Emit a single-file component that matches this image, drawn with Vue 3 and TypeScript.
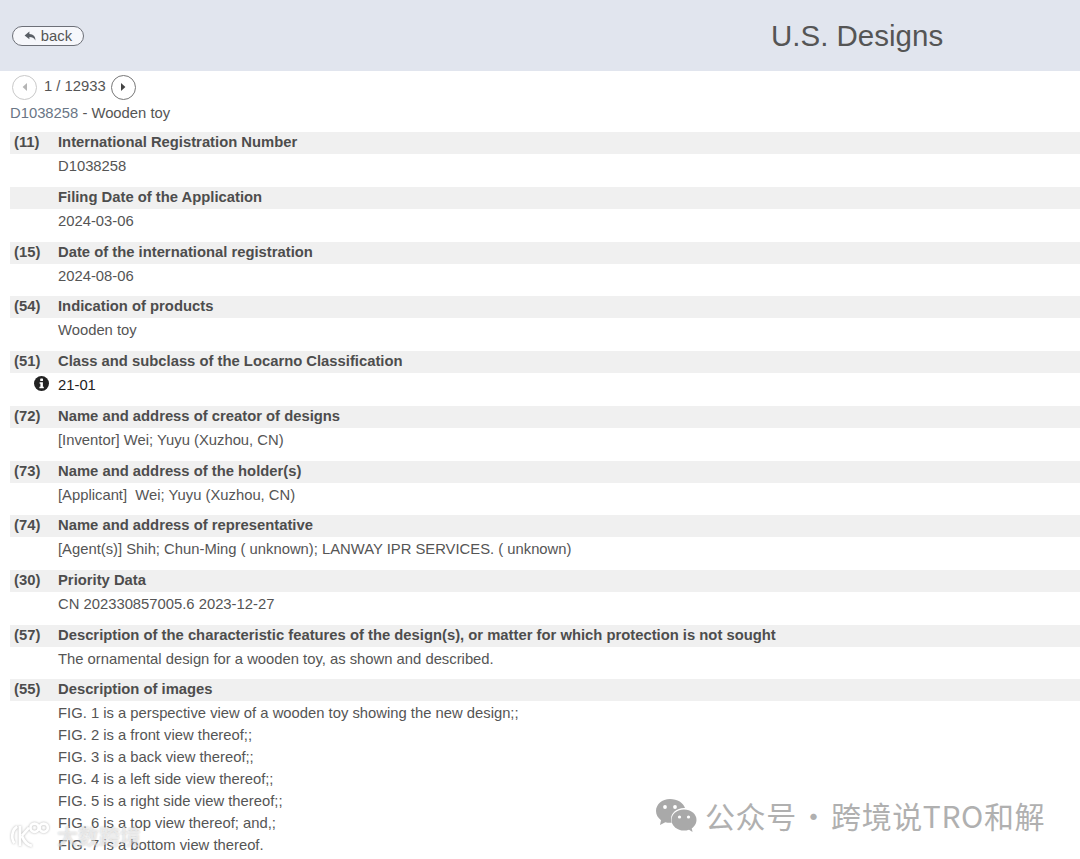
<script setup lang="ts">
interface Row { code: string; title: string; lines: string[]; dark?: boolean; info?: boolean }
const rows: Row[] = [
  { code: '(11)', title: 'International Registration Number', lines: ['D1038258'] },
  { code: '', title: 'Filing Date of the Application', lines: ['2024-03-06'] },
  { code: '(15)', title: 'Date of the international registration', lines: ['2024-08-06'] },
  { code: '(54)', title: 'Indication of products', lines: ['Wooden toy'] },
  { code: '(51)', title: 'Class and subclass of the Locarno Classification', lines: ['21-01'], dark: true, info: true },
  { code: '(72)', title: 'Name and address of creator of designs', lines: ['[Inventor] Wei; Yuyu (Xuzhou, CN)'] },
  { code: '(73)', title: 'Name and address of the holder(s)', lines: ['[Applicant]\u00a0 Wei; Yuyu (Xuzhou, CN)'] },
  { code: '(74)', title: 'Name and address of representative', lines: ['[Agent(s)] Shih; Chun-Ming ( unknown); LANWAY IPR SERVICES. ( unknown)'] },
  { code: '(30)', title: 'Priority Data', lines: ['CN 202330857005.6 2023-12-27'] },
  { code: '(57)', title: 'Description of the characteristic features of the design(s), or matter for which protection is not sought', lines: ['The ornamental design for a wooden toy, as shown and described.'] },
  { code: '(55)', title: 'Description of images', lines: [
    'FIG. 1 is a perspective view of a wooden toy showing the new design;;',
    'FIG. 2 is a front view thereof;;',
    'FIG. 3 is a back view thereof;;',
    'FIG. 4 is a left side view thereof;;',
    'FIG. 5 is a right side view thereof;;',
    'FIG. 6 is a top view thereof; and,;',
    'FIG. 7 is a bottom view thereof.',
  ] },
]
</script>

<template>
  <div class="page">
    <header class="top">
      <button class="back" type="button">
        <svg width="13" height="11" viewBox="0 0 13 11"><path d="M5.4 0.6 0.6 4.4l4.8 3.9V6c2.8 0 4.6.6 6 3.4.2-3.6-2-6.1-6-6.3z" fill="#5a5f66"/></svg>
        <span>back</span>
      </button>
      <h1>U.S. Designs</h1>
    </header>
    <div class="pager">
      <span class="round off"><svg width="6" height="8" viewBox="0 0 6 8"><path d="M5 0 0.6 4 5 8z" fill="#b5b5b5"/></svg></span>
      <span class="count">1 / 12933</span>
      <span class="round"><svg width="6" height="8" viewBox="0 0 6 8"><path d="M1 0 5.4 4 1 8z" fill="#444"/></svg></span>
    </div>
    <div class="crumb"><span class="id">D1038258</span> - Wooden toy</div>
    <section v-for="r in rows" :key="r.title" class="row">
      <div class="band"><span class="code">{{ r.code }}</span><span class="title">{{ r.title }}</span></div>
      <div class="body">
        <span class="side">
          <svg v-if="r.info" width="15" height="15" viewBox="0 0 15 15"><circle cx="7.5" cy="7.5" r="7.5" fill="#222"/><rect x="6.2" y="2.4" width="2.8" height="2.6" rx=".6" fill="#fff"/><path d="M5.6 6.2h3.3v4.5h.9v1.6H5.4v-1.6h1V7.8h-.8z" fill="#fff"/></svg>
        </span>
        <div class="lines" :class="{ dark: r.dark }">
          <div v-for="l in r.lines" :key="l" class="line">{{ l }}</div>
        </div>
      </div>
    </section>

    <div class="mark-left">
      <svg class="mark-logo" width="42" height="30" viewBox="0 0 46 30" fill="none" stroke="#fff" stroke-width="3">
        <path d="M9 6C3 9 2 19 6 24" /><path d="M12 5v22" /><path d="M14 16 22 7" /><path d="M14 16c3 7 6 10 11 11" />
        <circle cx="28" cy="7" r="4.5" /><circle cx="38" cy="7" r="4.5" />
      </svg>
      <span>大数跨境</span>
    </div>
    <div class="mark-right">
      <svg class="wechat" width="42" height="36" viewBox="0 0 42 36">
        <path d="M15 1C7 1 1 6.500 1 13c0 3.800 2 7 5 9.200L5 27l5.300-2.800c1.500.4 3 .6 4.700.6.600 0 1.100 0 1.600-.1-.4-1.200-.6-2.400-.6-3.700C16 15 21.600 10 29 10c.4 0 .7 0 1 .1C28.500 4.800 22.400 1 15 1z" fill="#a9a9a9"/>
        <ellipse cx="29" cy="22" rx="12.500" ry="10.500" fill="#a9a9a9"/>
        <path d="M33 31l4.500 3-1-5z" fill="#a9a9a9"/>
        <circle cx="10" cy="9" r="1.900" fill="#fff"/><circle cx="20" cy="9" r="1.900" fill="#fff"/>
        <circle cx="24.500" cy="19" r="1.600" fill="#fff"/><circle cx="33.500" cy="19" r="1.600" fill="#fff"/>
      </svg>
      <span>公众号 · 跨境说TRO和解</span>
    </div>
  </div>
</template>

<style scoped>
.page {
  position: relative;
  width: 1080px;
  height: 859px;
  overflow: hidden;
  background: #fff;
  color: #555;
  font-family: "Liberation Sans", Arial, sans-serif;
  font-size: 14.800px;
}
.top {
  height: 71px;
  background: #e1e5ee;
  display: flex;
  align-items: center;
  padding-left: 12px;
}
.back {
  width: 72px;
  height: 20px;
  margin-top: 1px;
  box-sizing: border-box;
  border: 1px solid #6d7078;
  border-radius: 10px;
  background: #f6f7fb;
  color: #555;
  font: 14.800px "Liberation Sans", Arial, sans-serif;
  display: flex;
  align-items: center;
  justify-content: center;
  gap: 4px;
  padding: 0;
}
.top h1 {
  margin: 0 0 0 687px;
  font-size: 29.500px;
  font-weight: 400;
  color: #555;
  white-space: nowrap;
}
.pager {
  height: 32px;
  display: flex;
  align-items: center;
  padding-left: 12px;
}
.count { margin: -2px 5px 0 7px; }
.round {
  width: 25px;
  height: 25px;
  box-sizing: border-box;
  border: 1.500px solid #777;
  border-radius: 50%;
  display: flex;
  align-items: center;
  justify-content: center;
  background: #fff;
}
.round.off { border-color: #c9c9c9; }
.crumb {
  margin-left: 10px;
  height: 20px;
  line-height: 20px;
  margin-bottom: 9.300px;
}
.id { color: #6a7686; }
.row {
  margin-left: 10px;
  margin-bottom: 9.720px;
}
.band {
  height: 22px;
  line-height: 21px;
  background: #f0f0f0;
  display: flex;
  font-weight: 700;
  color: #4d4d4d;
}
.code { width: 48px; padding-left: 4px; box-sizing: border-box; flex: none; }
.title { white-space: nowrap; }
.body { display: flex; }
.side {
  width: 48px;
  flex: none;
  display: flex;
  justify-content: flex-end;
  padding: 3px 9px 0 0;
  box-sizing: border-box;
}
.lines { padding-top: 1px; }
.lines.dark { color: #222; }
.line { height: 22px; line-height: 22px; white-space: nowrap; }
.mark-left {
  position: absolute;
  left: 9px;
  top: 820px;
  display: flex;
  align-items: center;
  gap: 6px;
  color: rgba(255, 255, 255, 0.55);
  font: 700 21px "Noto Sans CJK SC", sans-serif;
  text-shadow: 0 0 2px rgba(0, 0, 0, 0.22);
}
.mark-logo { filter: drop-shadow(0 0 1px rgba(0, 0, 0, 0.3)); }
.mark-right {
  position: absolute;
  left: 655px;
  top: 793px;
  display: flex;
  align-items: center;
  gap: 8px;
  color: #b0b0b0;
  font: 400 30px "Noto Sans CJK SC", sans-serif;
  letter-spacing: 0.6px;
  word-spacing: -5.500px;
  white-space: nowrap;
}
.wechat { margin-top: 2px; }
</style>
